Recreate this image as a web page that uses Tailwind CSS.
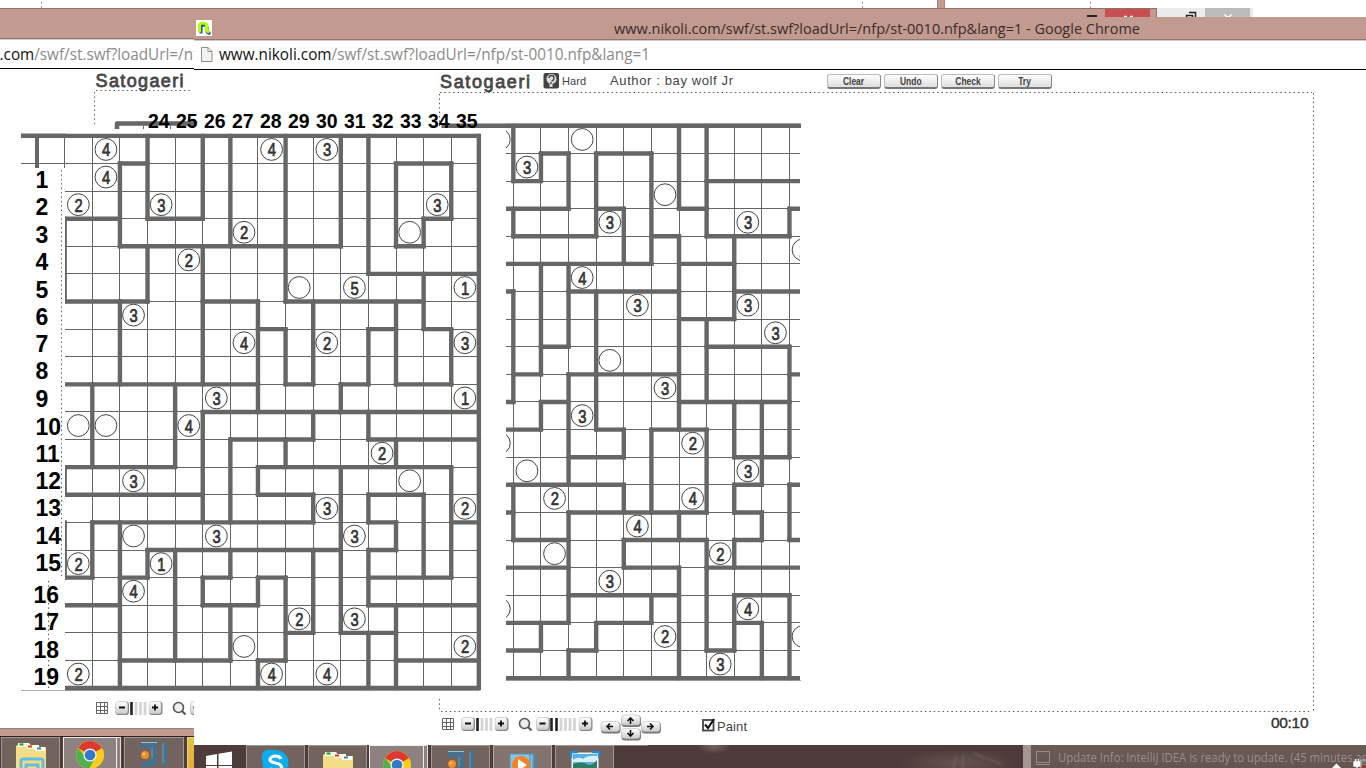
<!DOCTYPE html>
<html lang="en"><head><meta charset="utf-8"><title>Satogaeri</title>
<script src="https://cdn.jsdelivr.net/npm/@tailwindcss/browser@4"></script></head>
<body class="bg-white">
<div class="relative w-[1366px] h-[768px] overflow-hidden bg-white font-['Open_Sans','Noto_Sans',sans-serif]">

<!-- Window remnants behind the title bars -->
<svg class="absolute left-0 top-0" width="1366" height="20">
  <g stroke="#777" stroke-dasharray="1.4 3"><path d="M41.5 2V8M862.500 2V8M1090.500 2V8"/></g>
  <rect x="937" width="8" height="9" fill="#c39a90"/><path d="M937.500 0V8M944.500 0V8" stroke="#a5837b"/>
  <rect y="8" width="1157" height="12" fill="#c39a90"/><path d="M0 8.500H1156.500V18" fill="none" stroke="#8f6f67"/>
  <rect x="1157" y="8" width="96" height="10" fill="#ebebeb"/><rect x="1205" y="8" width="45" height="10" fill="#bcbcbc"/>
  <rect x="1105" y="9" width="45" height="9" fill="#c75050"/>
  <path d="M1124 16.500h3M1130 16.500h3M1224.500 14.500l2.500 2.500h2l2.500-2.500" stroke="#fff" stroke-width="1.500" fill="none"/>
  <rect x="1087" y="15" width="10" height="2" fill="#222"/>
  <path d="M1189 12.500h6.500V18M1186.500 18v-2.500h6V18" fill="none" stroke="#222" stroke-width="1.500"/>
</svg>

<!-- Left browser window -->
<section class="absolute left-0 top-[9px] w-[194px] h-[759px] overflow-hidden">
  <div class="h-[30px] bg-[#c39a90] border-b border-[#94766f]"></div>
  <div class="h-[30px] bg-white border-t border-b-1 border-t-[#c9cdd2] border-b-black">
    <svg class="block -ml-[78px]" width="440" height="28"><text x="0" y="19.500" font-size="16" textLength="430" lengthAdjust="spacingAndGlyphs" fill="#8b8b8b"><tspan fill="#111">www.nikoli.com</tspan>/swf/st.swf?loadUrl=/nfp/st-0010.nfp&amp;lang=1</text></svg>
  </div>
</section>

<!-- Right browser window -->
<section class="absolute left-[194px] top-[17px] w-[1172px] h-[53px]">
  <div class="h-[23px] bg-[#c39a90] border-b border-[#94766f] flex pl-[2px] pt-[3px]">
    <svg width="16" height="16" class="block"><rect width="16" height="16" fill="#fff"/><path d="M5 13.500V8q0-3 3-3t3 3v3q0 2 3.500 2.500" fill="none" stroke="#2748b8" stroke-width="3"/><path d="M3.500 12.500V7q-.5-4 3.500-4t3.500 4v2.500q0 2 3 2.200" fill="none" stroke="#b6ff00" stroke-width="3.200"/></svg>
    <svg width="540" height="20" class="block ml-[402px] -mt-[2px]"><text x="0" y="16" font-size="15" textLength="526" lengthAdjust="spacingAndGlyphs" fill="#392c2b">www.nikoli.com/swf/st.swf?loadUrl=/nfp/st-0010.nfp&amp;lang=1 - Google Chrome</text></svg>
  </div>
  <div class="h-[30px] bg-white border-t border-b border-t-[#c9cdd2] border-b-black flex pl-[7px]">
    <svg width="12" height="28" class="block"><path d="M.5 6.500h6.500l4 4v10H.5zM7 6.500v4h4" fill="#f2f2f2" stroke="#8d8d8d"/></svg>
    <svg class="block ml-[6px]" width="440" height="28"><text x="0" y="19" font-size="16" textLength="431" lengthAdjust="spacingAndGlyphs" fill="#8b8b8b"><tspan fill="#111">www.nikoli.com</tspan>/swf/st.swf?loadUrl=/nfp/st-0010.nfp&amp;lang=1</text></svg>
  </div>
</section>

<!-- Puzzle header -->
<header class="absolute left-[440px] top-[72px] w-[620px] h-[18px] flex">
  <svg width="380" height="20" class="block shrink-0 overflow-visible">
    <text x="0" y="15.800" font-family="Liberation Sans" font-size="18" textLength="90" fill="#484848" stroke="#484848" stroke-width=".8">Satogaeri</text>
    <rect x="103.500" y="1" width="15.500" height="15.500" rx="2" fill="#444"/><circle cx="111.500" cy="7" r="5" fill="#ddd"/><path d="M111 11v4" stroke="#ddd" stroke-width="3"/><path d="M109 6q0-2.500 2.500-2.500T114 6t-2.500 3M111 10v2" fill="none" stroke="#444" stroke-width="1.300"/>
    <text x="122" y="12.500" font-family="Liberation Sans" font-size="11" textLength="24" fill="#444">Hard</text>
    <text x="170" y="12.500" font-family="Liberation Sans" font-size="13" textLength="123" fill="#444">Author : bay wolf Jr</text>
  </svg>
  <div class="flex gap-[3px] ml-[7px] pt-[2px] font-['Liberation_Sans',sans-serif] text-[10px] font-bold text-[#444] leading-[13px] text-center">
    <button class="w-[54px] h-[15px] border border-[#bbb] border-b-[#777] border-b-2 border-r-[#888] rounded-[3px] bg-gradient-to-b from-white to-[#ddd]"><span class="inline-block scale-x-[.85]">Clear</span></button>
    <button class="w-[54px] h-[15px] border border-[#bbb] border-b-[#777] border-b-2 border-r-[#888] rounded-[3px] bg-gradient-to-b from-white to-[#ddd]"><span class="inline-block scale-x-[.85]">Undo</span></button>
    <button class="w-[54px] h-[15px] border border-[#bbb] border-b-[#777] border-b-2 border-r-[#888] rounded-[3px] bg-gradient-to-b from-white to-[#ddd]"><span class="inline-block scale-x-[.85]">Check</span></button>
    <button class="w-[54px] h-[15px] border border-[#bbb] border-b-[#777] border-b-2 border-r-[#888] rounded-[3px] bg-gradient-to-b from-white to-[#ddd]"><span class="inline-block scale-x-[.85]">Try</span></button>
  </div>
</header>

<!-- Puzzle canvas -->
<svg class="absolute left-0 top-0" width="1366" height="768">
  <defs>
    <clipPath id="cl"><rect x="65" y="130" width="420" height="562"/></clipPath>
    <clipPath id="cr"><rect x="506" y="120" width="294" height="570"/></clipPath>
    <clipPath id="ct"><rect x="0" y="690" width="194" height="38"/></clipPath>
    <linearGradient id="bt" x1="0" y1="0" x2="0" y2="1"><stop offset="0" stop-color="#fff"/><stop offset="1" stop-color="#ccc"/></linearGradient>
    <g id="key"><rect x=".5" y=".5" width="13.500" height="13.500" rx="3" fill="#888"/><rect x=".5" y=".5" width="12" height="12" rx="2.500" fill="url(#bt)" stroke="#ccc" stroke-width=".6"/></g>
    <g id="arr"><rect x=".5" y="1" width="19.500" height="11.500" rx="3.500" fill="#777"/><rect x=".5" y=".5" width="18.500" height="10" rx="3" fill="url(#bt)" stroke="#bbb" stroke-width=".6"/></g>
    <g id="tools">
      <path d="M442.500 718.500h11v11h-11zM446.500 718v12M450.500 718v12M442 722.500h12M442 726.500h12" fill="none" stroke="#666"/>
      <use href="#key" x="461" y="717"/><use href="#key" x="494.500" y="717"/><use href="#key" x="536" y="717"/><use href="#key" x="578.500" y="717"/>
      <path d="M465 723.500h6M498 723.500h6M501 720.500v6M539.500 723.500h6M582 723.500h6M585 720.500v6" stroke="#111" stroke-width="1.800"/>
      <path d="M477.500 718v13M551.500 718v13M556.500 718v13" stroke="#222" stroke-width="2.600"/>
      <path d="M482 718v13M486.500 718v13M491 718v13M561 718v13M565.500 718v13M570 718v13M574.500 718v13" stroke="#d5d5d5" stroke-width="2.800"/>
      <circle cx="524.500" cy="723.500" r="5" fill="#eee" stroke="#555" stroke-width="1.600"/><path d="M528 727l3.500 3.500" stroke="#555" stroke-width="2"/>
    </g>
  </defs>
  <g fill="none" stroke="#555" stroke-dasharray="1.400 3">
    <path d="M440 92.500H1312M1313.500 93V711M439.500 94V129M439.500 699V711M441 711.500H1312M96 90.500H191M94.500 92V124M61.500 170V577M48.500 581V689"/>
  </g>
  <text x="95.500" y="86.500" font-family="Liberation Sans" font-size="18" textLength="88" fill="#484848" stroke="#484848" stroke-width=".8">Satogaeri</text>
  <path d="M117 129V123.500H195" fill="none" stroke="#666" stroke-width="4.500" stroke-linejoin="round"/>
  <path d="M441.500 125.700H801" stroke="#666" stroke-width="4.400"/><path d="M480 129.500H506" stroke="#fff" stroke-width="3"/>
  <path d="M143.500 126v3M170.500 126v3" stroke="#666"/>
  <path d="M21 135.800H66" stroke="#666" stroke-width="4.400"/><path d="M37 136V168" stroke="#666" stroke-width="4"/>
  <path d="M21 163.500H65M64.500 138V168" stroke="#666"/>
  <path d="M21 690.500H479M506 680.500H801" stroke="#aaa"/>
  <g id="left" clip-path="url(#cl)"></g><g id="right" clip-path="url(#cr)"></g>
  <g id="nums" font-family="Liberation Sans" font-weight="bold" fill="#000"></g>
  <use href="#tools"/>
  <g clip-path="url(#ct)"><use href="#tools" x="-346" y="-16"/></g>
  <use href="#arr" x="600.500" y="721"/><use href="#arr" x="641" y="721"/><use href="#arr" x="621" y="714.500"/><use href="#arr" x="621" y="728"/>
  <path d="M613 726.500h-6m3-3l-3 3 3 3M647 726.500h6m-3-3l3 3-3 3M630.500 724v-6m-3 3l3-3 3 3M630.500 730v6m-3-3l3 3 3-3" fill="none" stroke="#111" stroke-width="1.600"/>
  <rect x="703" y="720" width="10.500" height="10.500" fill="#fff" stroke="#444" stroke-width="1.800"/><path d="M705 724.500l3 3.500 6-9" fill="none" stroke="#111" stroke-width="2"/>
  <text x="717" y="730.500" font-family="Liberation Sans" font-size="13" textLength="30" fill="#444">Paint</text>
  <text x="1271" y="728" font-family="Liberation Sans" font-size="15.500" textLength="37.500" fill="#333" stroke="#333" stroke-width=".4">00:10</text>
</svg>

<!-- Left taskbar -->
<div class="absolute left-0 top-[728px] w-[194px] h-[40px] overflow-hidden">
  <div class="h-[8px] bg-[#c39a90] border-t border-[#94827e]"></div>
  <div class="h-[32px] bg-[#4d3c39] border-t border-[#31211f] flex gap-[3px] pl-[1px]">
    <div class="w-[59px] h-[40px] shrink-0 border border-[#a39794] bg-[#73635f] flex justify-center pt-[4px]"><svg width="32" height="34" class="block"><path d="M1 4l3-2h8l3 3h16v29H1z" fill="#f3dd86"/><path d="M3 1h11l3 4H3zM12 3h12v4H12zM20 5h10v4H20z" fill="#fffbe5"/><path d="M4.500 2.500h4" stroke="#16a839" stroke-width="2.200"/><path d="M13 4.500h4" stroke="#d33" stroke-width="2"/><path d="M22 6.500h4" stroke="#38b" stroke-width="2"/><path d="M6 31V19q0-2 2-2h18q2 0 2 2v12M11 31v-8h12v8" fill="none" stroke="#64bdda" stroke-width="3"/></svg></div>
    <div class="w-[54px] h-[40px] shrink-0 border border-[#eee] bg-[#8e8280] flex justify-center pt-[2px]"><svg width="30" height="30" viewBox="0 0 30 30" class="block"><use href="#chrome"/></svg></div>
    <div class="w-[4px] h-[40px] -ml-[3px] shrink-0 border-r border-y border-[#ddd] bg-[#8e8280]"></div>
    <div class="w-[60px] h-[40px] shrink-0 border border-[#a39794] bg-[#73635f] flex justify-center pt-[3px]"><svg width="30" height="30" class="block"><use href="#ji"/></svg></div>
    <div class="w-[10px] h-[40px] shrink-0 border border-[#e9d28a] bg-gradient-to-b from-[#dfc43e] to-[#eba536]"></div>
  </div>
</div>

<!-- Right taskbar -->
<div class="absolute left-[194px] top-[745px] w-[1172px] h-[23px] overflow-hidden bg-[#4d3c39] flex">
  <div class="w-[52px] shrink-0 pl-[11px] pt-[6px]"><svg width="28" height="18" class="block"><path d="M1 5l11-2v11H1zM13.500 2.700L27 .500V14H13.500zM1 15h11v3H1zM13.500 15H27v3H13.500z" fill="#fff"/></svg></div>
  <div class="w-[59px] h-[40px] shrink-0 border border-[#a39794] bg-[#73635f] flex justify-center pt-[3px]"><svg width="30" height="24" class="block"><circle cx="14.500" cy="14" r="13" fill="#0aaef0"/><circle cx="8" cy="8" r="7.500" fill="#0aaef0"/><path d="M20 10q-1-3-5.500-3T9 10.500q0 2.500 5.500 3.500t6 4-5 4-6.500-3" fill="none" stroke="#fff" stroke-width="3.200"/></svg></div>
  <div class="w-[59px] h-[40px] ml-[3px] shrink-0 border border-[#a39794] bg-[#73635f] flex justify-center pt-[5px]"><svg width="32" height="34" class="block"><path d="M1 4l3-2h8l3 3h16v29H1z" fill="#f3dd86"/><path d="M3 1h11l3 4H3zM12 3h12v4H12zM20 5h10v4H20z" fill="#fffbe5"/><path d="M4.500 2.500h4" stroke="#16a839" stroke-width="2.200"/><path d="M13 4.500h4" stroke="#d33" stroke-width="2"/><path d="M22 6.500h4" stroke="#38b" stroke-width="2"/></svg></div>
  <div class="w-[55px] h-[40px] ml-[2px] shrink-0 border border-[#eee] bg-[#8e8280] flex justify-center pt-[4px]"><svg width="30" height="30" viewBox="0 0 30 30" class="block"><use href="#chrome"/></svg></div>
  <div class="w-[4px] h-[40px] shrink-0 border-r border-y border-[#ddd] bg-[#8e8280]"></div>
  <div class="w-[59px] h-[40px] ml-[3px] shrink-0 border border-[#a39794] bg-[#73635f] flex justify-center pt-[4px]"><svg width="30" height="30" class="block"><use href="#ji"/></svg></div>
  <div class="w-[59px] h-[40px] ml-[3px] shrink-0 border border-[#b5a9a6] bg-[#83736f] flex justify-center pt-[7px]"><svg width="28" height="20" class="block"><path d="M1 1h24v19H1z" fill="#8cc4e0" stroke="#4d96bd"/><path d="M21 1v19M24 1v19M27 2v18" stroke="#3f86ac"/><circle cx="12" cy="12" r="9" fill="#f58220"/><path d="M9 6l9 6-9 6z" fill="#fff"/></svg></div>
  <div class="w-[59px] h-[40px] ml-[3px] shrink-0 border border-[#a39794] bg-[#73635f] flex justify-center pt-[5px]"><svg width="30" height="20" class="block"><rect x="1.500" y="1.500" width="27" height="24" fill="#eef7fc"/><rect x="3" y="3" width="24" height="20" fill="#58b0e8"/><path d="M3 9q5-4 10-1 5-4 14-3v6H3z" fill="#d9effa"/><path d="M3 13q9-3 14 0t10-4v11H3z" fill="#2d7d62"/><path d="M1 7V1h7M22 1h7v6" fill="none" stroke="#2489dd" stroke-width="2.500"/></svg></div>
  <div class="w-[34px] h-px bg-[#8b7d79] shrink-0"></div>
  <div class="w-[375px] shrink-0"><svg width="375" height="23" class="block"><defs><radialGradient id="w"><stop stop-color="#87766d" stop-opacity=".75"/><stop offset="1" stop-color="#87766d" stop-opacity="0"/></radialGradient></defs><ellipse cx="66" cy="0" rx="17" ry="9" fill="url(#w)"/><ellipse cx="310" cy="18" rx="60" ry="14" fill="url(#w)" opacity=".55"/><path d="M305 23l4-12M315 23V10M325 8l28 11" stroke="#7b6a60" stroke-opacity=".3" stroke-width="3"/></svg></div>
  <div class="w-[8px] shrink-0 bg-[#a59692]"></div>
  <div class="w-[335px] shrink-0 bg-[#65554f] bg-gradient-to-b from-[#6b5b57] to-[#65544f]">
    <svg width="335" height="23" class="block"><rect x="5.500" y="6.500" width="13" height="11" fill="none" stroke="#998a86"/><path d="M5 19.500h14" stroke="#998a86"/>
    <text x="27" y="17" font-size="12" textLength="310" lengthAdjust="spacingAndGlyphs" fill="#9c8d89">Update Info: IntelliJ IDEA is ready to update. (45 minutes ag</text>
    <path d="M301 23l4.500-4.500L310 23z" fill="#fff"/><path d="M323 17h6v4h-6zM324.500 14v3M327.500 14v3M326 21v2" stroke="#fff" fill="#fff" stroke-width="1.300"/><path d="M330 23v-8h6" fill="none" stroke="#bbb"/><rect x="331" y="21" width="3" height="2" fill="#c22"/></svg>
  </div>
</div>
<svg width="0" height="0" class="absolute"><defs>
  <g id="chrome"><circle cx="15" cy="15" r="14" fill="#fccd18"/><path d="M15 15L2.900 8A14 14 0 0 1 27.100 8z" fill="#dc3a31"/><path d="M15 15h-6L2.900 8A14 14 0 0 0 14 29l6-11z" fill="#4fb050"/><circle cx="15" cy="15" r="6.600" fill="#f2f2f2"/><circle cx="15" cy="15" r="5.300" fill="#347ac6"/></g>
  <g id="ji"><path d="M2 1H18V18q0 8-8 8H2v-5h6q4 0 4-4V7H4q-2 0-2-2z" fill="#44718d"/><path d="M2 1.500H18M23 1.500h5" stroke="#8fc4dc"/><path d="M23 1h5v21q0 3-5 3z" fill="#44718d"/><path d="M13 7v10M24 2v20" stroke="#6f9db5"/><circle cx="6" cy="14" r="4" fill="#f58a1f"/><circle cx="5" cy="13" r="1.500" fill="#ffc27a"/></g>
</defs></svg>
</div>
<script>
const NS='http://www.w3.org/2000/svg';
function add(g,tag,a,t){const e=document.createElementNS(NS,tag);for(const k in a)e.setAttribute(k,a[k]);if(t!==undefined)e.textContent=t;g.appendChild(e)}
function board(id,x0,y0,p,cols,H,V,C){
  const g=document.getElementById(id),X=k=>x0+p*k,Y=j=>y0+p*j,F='#666';
  for(let k=1;k<cols;k++)add(g,'rect',{x:Math.floor(X(k)),y:y0,width:1,height:p*20,fill:F});
  for(let j=1;j<20;j++)add(g,'rect',{x:X(0),y:Math.floor(Y(j)),width:p*cols,height:1,fill:F});
  H.forEach((s,j)=>s.forEach(([a,b])=>add(g,'rect',{x:X(a)-2.2,y:Y(j)-2.2,width:p*(b-a)+4.4,height:4.4,rx:1,fill:F})));
  V.forEach((s,k)=>s.forEach(([a,b])=>add(g,'rect',{x:X(k)-2.2,y:Y(a)-2.2,width:4.4,height:p*(b-a)+4.4,rx:1,fill:F})));
  C.forEach(([c,r,n])=>{const cx=X(c+.5)-.2,cy=Y(r+.5)-.2;
    add(g,'circle',{cx,cy,r:10.9,fill:'#fff',stroke:'#444','stroke-width':1});
    if(n)add(g,'text',{transform:`translate(${cx+.2} ${cy+7}) scale(.8 1)`,'font-family':'Liberation Sans','font-size':18.5,'text-anchor':'middle',fill:'#333',stroke:'#333','stroke-width':.7},n)});
}
board('left',64.7,135.85,27.61,15,
[[[0,15]],[[2,3],[12,14]],[],[[0,2],[3,5],[13,14]],[[2,10],[12,13]],[[11,15]],[[0,3],[5,7],[8,13]],[[7,8],[11,12],[13,14]],[],[[0,7],[8,9],[10,11],[12,14]],[[5,15]],[[6,9],[11,15]],[[0,4],[7,14]],[[0,5],[7,9],[11,13]],[[1,9],[11,12],[14,15]],[[3,10],[11,12]],[[0,1],[2,3],[5,6],[7,8],[11,14]],[[0,2],[5,7],[11,15]],[[8,9],[10,12]],[[2,6],[7,8],[12,15]],[[0,15]]],
[[[3,6],[12,13],[14,16]],[[9,12],[14,16]],[[1,4],[6,9],[14,20]],[[0,3],[4,6],[15,16]],[[9,12],[15,19]],[[0,3],[4,9],[10,14],[16,17]],[[0,4],[11,14],[15,16],[17,19]],[[6,10],[12,13],[16,17],[19,20]],[[0,6],[7,9],[11,12],[16,19]],[[6,9],[10,11],[13,14],[15,18]],[[0,4],[9,10],[12,18]],[[0,5],[7,9],[10,11],[13,14],[15,17],[18,20]],[[1,4],[6,9],[11,12],[14,15],[17,20]],[[3,4],[5,7],[13,16]],[[1,3],[7,9],[12,16]],[[0,20]]],
[[1,0,4],[7,0,4],[9,0,3],[1,1,4],[0,2,2],[3,2,3],[13,2,3],[6,3,2],[12,3],[4,4,2],[8,5],[10,5,5],[14,5,1],[2,6,3],[6,7,4],[9,7,2],[14,7,3],[5,9,3],[14,9,1],[0,10],[1,10],[4,10,4],[11,11,2],[2,12,3],[12,12],[9,13,3],[14,13,2],[2,14],[5,14,3],[10,14,3],[0,15,2],[3,15,1],[2,16,4],[8,17,2],[10,17,3],[6,18],[14,18,2],[0,19,2],[7,19,4],[9,19,4]]);
board('right',485.72,125.85,27.613,12,
[[[0,12]],[[2,3],[4,6]],[[1,2],[8,12]],[[0,3],[4,5],[7,8],[11,12]],[[1,4],[6,7],[8,11]],[[0,6],[7,9]],[[0,1],[3,7],[9,12]],[[7,9]],[[2,3],[8,11]],[[1,2],[3,7],[11,12]],[[0,1],[2,3],[7,11]],[[0,2],[4,5],[6,8]],[[3,5],[9,11]],[[0,5],[9,10],[11,12]],[[0,1],[3,8],[9,10]],[[1,3],[5,8],[9,10],[11,12]],[[0,3],[5,7],[8,12]],[[3,7],[9,11]],[[0,3],[4,6],[9,10]],[[0,2],[3,4],[8,9]],[[0,12]]],
[[],[[0,2],[3,4],[6,10],[13,15]],[[1,2],[5,9],[10,11],[18,19]],[[1,3],[5,8],[9,13],[14,18],[19,20]],[[1,4],[6,11],[18,19]],[[3,5],[11,12],[13,14],[15,16]],[[1,5],[11,14],[17,18]],[[0,3],[4,11],[14,15],[16,20]],[[0,4],[7,10],[11,14],[15,19]],[[4,7],[10,12],[13,14],[15,16],[17,19]],[[10,13],[14,15],[18,20]],[[3,4],[8,12],[13,15],[17,20]]],
[[0,0],[3,0],[1,1,3],[6,2],[4,3,3],[9,3,3],[11,4,2],[3,5,4],[5,6,3],[9,6,3],[10,7,3],[4,8],[6,9,3],[3,10,3],[0,11],[7,11,2],[1,12],[9,12,3],[2,13,2],[7,13,4],[5,14,4],[2,15],[8,15,2],[4,16,3],[0,17],[9,17,4],[6,18,2],[11,18],[8,19,3]]);
const n=document.getElementById('nums');
for(let i=24;i<36;i++)add(n,'text',{x:148+28*(i-24),y:127.5,'font-size':20.5,textLength:21.6,lengthAdjust:'spacingAndGlyphs'},i);
[188,215,242.5,270,297.5,324.5,352,379,406.5,434.5,462,489,516,543.5,571,602.5,630,657.5,685].forEach((y,i)=>add(n,'text',{x:i>14?33.5:35.5,y,'font-size':23},i+1));
</script>
</body></html>
